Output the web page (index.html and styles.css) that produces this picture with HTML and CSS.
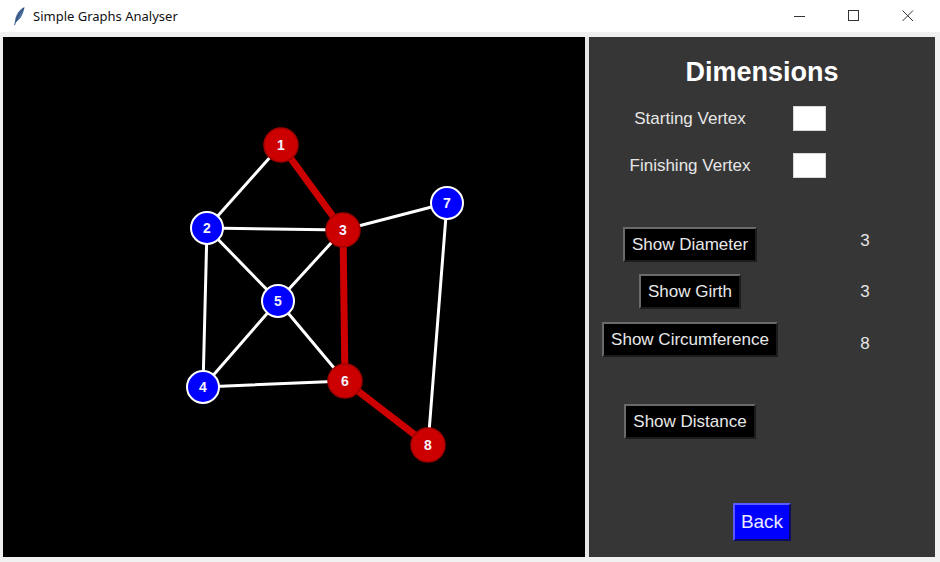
FILE: index.html
```html
<!DOCTYPE html>
<html>
<head>
<meta charset="utf-8">
<title>Simple Graphs Analyser</title>
<link rel="stylesheet" href="styles.css">
</head>
<body>
<div class="window">
  <div class="titlebar">
    <svg class="app-icon" width="16" height="20" viewBox="0 0 16 20">
      <path d="M13.5 1 C8 3.5 4.5 9 4 15.5 L3 19 L4.2 19 L5 16 C10 13 12.5 7.5 13.5 1 Z" fill="#4a6fa0"/>
      <path d="M13 2 C9 6 6.5 10.5 4.6 16.5" stroke="#2a3f60" stroke-width="0.8" fill="none"/>
    </svg>
    <span class="title">Simple Graphs Analyser</span>
    <div class="controls">
      <span class="ctl">
        <svg width="12" height="12" viewBox="0 0 12 12"><path d="M0 6.5 H11" stroke="#333" stroke-width="1"/></svg>
      </span>
      <span class="ctl">
        <svg width="12" height="12" viewBox="0 0 12 12"><rect x="0.5" y="0.5" width="10" height="10" fill="none" stroke="#333" stroke-width="1"/></svg>
      </span>
      <span class="ctl">
        <svg width="12" height="12" viewBox="0 0 12 12"><path d="M0.5 0.5 L11 11 M11 0.5 L0.5 11" stroke="#333" stroke-width="1"/></svg>
      </span>
    </div>
  </div>
  <div class="main">
    <div class="canvas">
      <svg width="582" height="520" viewBox="3 37 582 520">
        <g stroke="#ffffff" stroke-width="3" stroke-linecap="round">
          <line x1="281" y1="145" x2="207" y2="228"/>
          <line x1="207" y1="228" x2="343" y2="230"/>
          <line x1="207" y1="228" x2="278" y2="301"/>
          <line x1="207" y1="228" x2="203" y2="387"/>
          <line x1="343" y1="230" x2="278" y2="301"/>
          <line x1="343" y1="230" x2="447" y2="203"/>
          <line x1="278" y1="301" x2="203" y2="387"/>
          <line x1="278" y1="301" x2="345" y2="381"/>
          <line x1="203" y1="387" x2="345" y2="381"/>
          <line x1="447" y1="203" x2="428" y2="445"/>
        </g>
        <g stroke="#cc0000" stroke-width="7">
          <line x1="281" y1="145" x2="343" y2="230"/>
          <line x1="343" y1="230" x2="345" y2="381"/>
          <line x1="345" y1="381" x2="428" y2="445"/>
        </g>
        <g class="red-node">
          <circle cx="281" cy="145" r="17"/>
          <circle cx="343" cy="230" r="17"/>
          <circle cx="345" cy="381" r="17"/>
          <circle cx="428" cy="445" r="17"/>
        </g>
        <g class="blue-node">
          <circle cx="207" cy="228" r="16"/>
          <circle cx="203" cy="387" r="16"/>
          <circle cx="278" cy="301" r="16"/>
          <circle cx="447" cy="203" r="16"/>
        </g>
        <g class="node-label">
          <text x="281" y="150">1</text>
          <text x="207" y="233">2</text>
          <text x="343" y="235">3</text>
          <text x="203" y="392">4</text>
          <text x="278" y="306">5</text>
          <text x="345" y="386">6</text>
          <text x="447" y="208">7</text>
          <text x="428" y="450">8</text>
        </g>
      </svg>
    </div>
    <div class="divider"></div>
    <div class="panel">
      <h1 class="heading">Dimensions</h1>
      <div class="row entry-row first">
        <span class="cell-left label">Starting Vertex</span>
        <span class="cell-right entry-cell"><span class="entry"></span></span>
      </div>
      <div class="row entry-row second">
        <span class="cell-left label">Finishing Vertex</span>
        <span class="cell-right entry-cell"><span class="entry"></span></span>
      </div>
      <div class="row btn-row diam">
        <span class="cell-left"><span class="btn">Show Diameter</span></span>
        <span class="cell-right value v1">3</span>
      </div>
      <div class="row btn-row girth">
        <span class="cell-left"><span class="btn">Show Girth</span></span>
        <span class="cell-right value v2">3</span>
      </div>
      <div class="row btn-row circ">
        <span class="cell-left"><span class="btn">Show Circumference</span></span>
        <span class="cell-right value v3">8</span>
      </div>
      <div class="row btn-row dist">
        <span class="cell-left"><span class="btn">Show Distance</span></span>
      </div>
      <div class="back-row">
        <span class="back">Back</span>
      </div>
    </div>
  </div>
</div>
</body>
</html>
```
FILE: styles.css
```css
html, body {
  margin: 0;
  padding: 0;
}
body {
  width: 940px;
  height: 562px;
  overflow: hidden;
  background: #f0f0f0;
  font-family: "Liberation Sans", Arial, sans-serif;
}
.window {
  display: flex;
  flex-direction: column;
  height: 562px;
}
.titlebar {
  height: 32px;
  background: #ffffff;
  display: flex;
  align-items: center;
  flex-shrink: 0;
}
.app-icon {
  margin-left: 11px;
  margin-right: 6px;
}
.title {
  font-family: "Noto Sans", "Open Sans", sans-serif;
  font-size: 13px;
  color: #111;
}
.controls {
  margin-left: auto;
  display: flex;
  margin-right: 5px;
}
.ctl {
  width: 54px;
  height: 32px;
  display: flex;
  align-items: center;
  justify-content: center;
}
.main {
  flex: 1;
  display: flex;
  padding: 5px 5px 5px 3px;
  background: #f0f0f0;
}
.canvas {
  width: 582px;
  height: 520px;
  background: #000;
  flex-shrink: 0;
}
.canvas svg {
  display: block;
}
.red-node circle {
  fill: #cc0000;
  stroke: #a00000;
  stroke-width: 1.5;
}
.blue-node circle {
  fill: #0000ff;
  stroke: #ffffff;
  stroke-width: 2;
}
.node-label text {
  font-family: "Liberation Sans", Arial, sans-serif;
  font-weight: bold;
  font-size: 14px;
  fill: #f6f2ff;
  text-anchor: middle;
}
.divider {
  width: 4px;
  background: #e8e8e8;
  flex-shrink: 0;
}
.panel {
  width: 346px;
  height: 520px;
  background: #363636;
  flex-shrink: 0;
  box-sizing: border-box;
  padding-top: 20px;
  color: #e6e6e6;
}
.heading {
  margin: 0;
  height: 30px;
  line-height: 30px;
  font-size: 27px;
  font-weight: bold;
  color: #ffffff;
  text-align: center;
}
.row {
  display: flex;
  align-items: flex-start;
}
.cell-left {
  width: 202px;
  display: flex;
  justify-content: center;
  flex-shrink: 0;
}
.cell-right {
  width: 144px;
  display: flex;
}
.label {
  font-size: 17px;
  line-height: 25px;
  height: 25px;
}
.entry-row {
  height: 25px;
}
.entry-row.first { margin-top: 19px; }
.entry-row.second { margin-top: 22px; }
.entry-cell {
  padding-left: 2px;
}
.entry {
  display: block;
  width: 33px;
  height: 25px;
  box-sizing: border-box;
  background: #ffffff;
  border: 1px solid #d8d8d8;
}
.btn {
  display: inline-block;
  box-sizing: border-box;
  height: 35px;
  padding: 0 7px;
  line-height: 31px;
  font-size: 17px;
  background: #000;
  color: #e8e8e8;
  border: 2px solid;
  border-color: #6a6a6a #1c1c1c #1c1c1c #6a6a6a;
}
.btn-row.diam { margin-top: 49px; }
.btn-row.girth { margin-top: 12px; }
.btn-row.circ { margin-top: 13px; }
.btn-row.dist { margin-top: 47px; }
.value {
  justify-content: center;
  padding-left: 4px;
  font-size: 17px;
  line-height: 20px;
  color: #e6e6e6;
}
.v1 { margin-top: 4px; }
.v2 { margin-top: 8px; }
.v3 { margin-top: 12px; }
.back-row {
  margin-top: 64px;
  display: flex;
  justify-content: center;
}
.back {
  display: inline-block;
  box-sizing: border-box;
  height: 38px;
  padding: 0 6px;
  line-height: 34px;
  font-size: 19px;
  background: #0000ff;
  color: #e8e8ff;
  border: 2px solid;
  border-color: #5a5aff #0c0c60 #0c0c60 #5a5aff;
}
```
